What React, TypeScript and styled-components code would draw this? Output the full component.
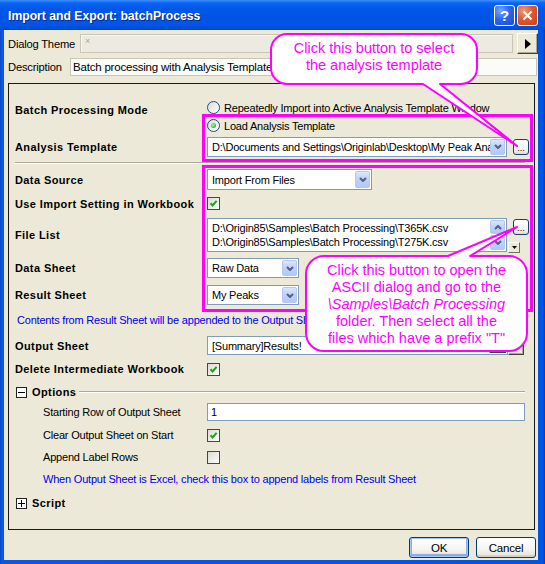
import styled, { createGlobalStyle } from "styled-components";

const GlobalStyle = createGlobalStyle`
	html, body {
		margin: 0;
		padding: 0;
		background: #fff;
	}

	body {
		font-family: "Liberation Sans", Arial, sans-serif;
		font-size: 11px;
		letter-spacing: -.2px;
		color: #000;
	}
`;

const MAGENTA = "#FF00FF";

const Window = styled.div`
	position: relative;
	width: 545px;
	height: 564px;
	display: flex;
	flex-direction: column;
	background: linear-gradient(to right, #0841BB 0, #0A57E6 1px, #0055E5 calc(100% - 2px), #0036B0 100%);
	overflow: hidden;
`;

const TitleBar = styled.div`
	height: 30px;
	flex: none;
	display: flex;
	align-items: center;
	padding: 0 7px 0 8px;
	background: linear-gradient(to bottom, #3D8FFC 0, #0B63F2 3px, #0058E8 9px, #0054E3 18px, #0056E7 25px, #0048D0 30px);
`;

const Title = styled.span`
	flex: 1;
	color: #fff;
	font-weight: bold;
	font-size: 12.2px;
	letter-spacing: 0;
	text-shadow: 1px 1px 0 #0A2A8C;
	margin-top: 1px;
`;

const CaptionButton = styled.span<{ $variant: "help" | "close" }>`
	width: 21px;
	height: 21px;
	box-sizing: border-box;
	margin-left: 2px;
	border: 1px solid #fff;
	border-radius: 3px;
	display: flex;
	align-items: center;
	justify-content: center;
	color: #fff;
	font-weight: bold;
	font-size: 15px;
	background: ${(p) =>
		p.$variant === "close"
			? "radial-gradient(circle at 30% 25%, #F39A7A 0, #E2582E 45%, #C7401A 100%)"
			: "radial-gradient(circle at 30% 25%, #7AA7FF 0, #2A66EE 45%, #1A4DD0 100%)"};
`;

const Client = styled.div`
	flex: 1;
	margin: 0 7px 4px 4px;
	padding: 3px 0 0 4px;
	background: #ECE9D8;
	display: flex;
	flex-direction: column;
`;

const TopRow = styled.div<{ $mt: number; $h: number }>`
	display: flex;
	align-items: center;
	height: ${(p) => p.$h}px;
	margin-top: ${(p) => p.$mt}px;
`;

const TopLabel = styled.span<{ $w: number }>`
	width: ${(p) => p.$w}px;
	flex: none;
	font-size: 11.2px;
`;

const ThemeBox = styled.div`
	flex: 1;
	height: 19px;
	box-sizing: border-box;
	margin-right: 4px;
	border: 1px solid #C9C6B6;
	background: #EDEBE1;
	box-shadow: inset 1px 1px 0 #F7F6F0;
	color: #A8A69C;
	font-size: 9px;
	padding: 1px 0 0 4px;
`;

const ClassicButton = styled.span<{ $w: number; $h: number }>`
	width: ${(p) => p.$w}px;
	height: ${(p) => p.$h}px;
	box-sizing: border-box;
	flex: none;
	display: flex;
	align-items: center;
	justify-content: center;
	background: #ECE9D8;
	border: 1px solid;
	border-color: #fff #404040 #404040 #fff;
	box-shadow: inset -1px -1px 0 #ACA899;
`;

const DescBox = styled.div`
	flex: 1;
	height: 18px;
	box-sizing: border-box;
	margin-right: 1px;
	border: 1px solid #C9C6B6;
	background: #FBFBF8;
	padding: 0 2px;
	line-height: 16px;
	white-space: nowrap;
	overflow: hidden;
	font-size: 11.5px;
`;

const Panel = styled.div`
	flex: 1;
	margin: 7px 3px 0 0;
	border: 1px solid #1A1A1A;
	display: flex;
	flex-direction: column;
	padding-top: 15px;
`;

const Row = styled.div<{ $mt: number; $h: number }>`
	display: grid;
	grid-template-columns: 198px 1fr;
	align-items: center;
	height: ${(p) => p.$h}px;
	margin-top: ${(p) => p.$mt}px;
	padding-right: 9px;
`;

const Label = styled.span<{ $indent?: boolean; $shift?: number }>`
	padding-left: ${(p) => (p.$indent ? 34 : 6)}px;
	font-weight: ${(p) => (p.$indent ? "normal" : "bold")};
	letter-spacing: ${(p) => (p.$indent ? "-.2px" : ".4px")};
	margin-top: ${(p) => p.$shift ?? 0}px;
	white-space: nowrap;
`;

const Control = styled.div`
	display: flex;
	align-items: center;
	height: 100%;
`;

const Note = styled.div<{ $indent?: boolean }>`
	grid-column: 1 / -1;
	padding-left: ${(p) => (p.$indent ? 34 : 8)}px;
	color: #0000F0;
	white-space: nowrap;
`;

const Separator = styled.div`
	margin: 5px 9px 0 6px;
	height: 0;
	border-top: 1px solid #ACA899;
	border-bottom: 1px solid #fff;
`;

const RadioCircle = styled.span<{ $checked?: boolean }>`
	width: 13px;
	height: 13px;
	box-sizing: border-box;
	flex: none;
	border-radius: 50%;
	border: 1px solid #1C5180;
	background: linear-gradient(135deg, #DCDCD7 0%, #F4F4F0 70%, #FFFFFF 100%);
	display: flex;
	align-items: center;
	justify-content: center;
	margin-right: 4px;

	&::after {
		content: "";
		width: 5px;
		height: 5px;
		border-radius: 50%;
		background: ${(p) => (p.$checked ? "radial-gradient(circle at 40% 40%, #B6F5B2 0, #3DC13A 60%, #21A121 100%)" : "transparent")};
	}
`;

const RadioText = styled.span`
	white-space: nowrap;
`;

const CheckBox = styled.span`
	width: 13px;
	height: 13px;
	box-sizing: border-box;
	flex: none;
	border: 1px solid #1C5180;
	background: linear-gradient(135deg, #DCDCD7 0%, #F2F2EE 70%, #FFFFFF 100%);
	display: flex;
	align-items: center;
	justify-content: center;
`;

const ComboBox = styled.div<{ $w: number; $h: number }>`
	width: ${(p) => p.$w}px;
	height: ${(p) => p.$h}px;
	box-sizing: border-box;
	flex: none;
	border: 1px solid #7F9DB9;
	background: #fff;
	padding: 1px;
	display: flex;
`;

const FieldText = styled.span`
	flex: 1;
	padding-left: 3px;
	display: flex;
	align-items: center;
	white-space: nowrap;
	overflow: hidden;
`;

const ArrowButton = styled.span<{ $h?: number }>`
	width: 15px;
	height: ${(p) => (p.$h ? `${p.$h}px` : "auto")};
	box-sizing: border-box;
	flex: none;
	border: 1px solid #B4C8F5;
	border-radius: 2px;
	background: linear-gradient(to bottom, #DCE6FE 0%, #C2D4FC 40%, #B3C7F6 100%);
	display: flex;
	align-items: center;
	justify-content: center;
`;

const EllipsisButton = styled.span`
	width: 16px;
	height: 16px;
	box-sizing: border-box;
	flex: none;
	margin-left: 6px;
	border: 1px solid #1C3F78;
	border-radius: 3px;
	background: linear-gradient(to bottom, #FFFFFF 0%, #F3F3EE 70%, #DCDAD0 100%);
	font-size: 9px;
	letter-spacing: 0;
	text-align: center;
	line-height: 16px;
`;

const ListBox = styled.div`
	width: 300px;
	height: 34px;
	box-sizing: border-box;
	flex: none;
	border: 1px solid #7F9DB9;
	background: #fff;
	padding: 1px;
	display: flex;
`;

const ListLines = styled.div`
	flex: 1;
	padding: 1px 0 0 3px;
	line-height: 14px;
	white-space: nowrap;
`;

const ScrollColumn = styled.div`
	display: flex;
	flex-direction: column;
	gap: 1px;
`;

const SideColumn = styled.div`
	height: 100%;
	display: flex;
	flex-direction: column;
	align-items: flex-start;
	justify-content: space-between;
	padding-top: 1px;
`;

const MiniDrop = styled(ClassicButton)`
	margin-left: 1px;
	border-color: #fff #716F64 #716F64 #fff;
	box-shadow: none;
`;

const TextBox = styled.div<{ $w: number; $h: number }>`
	width: ${(p) => p.$w}px;
	height: ${(p) => p.$h}px;
	box-sizing: border-box;
	flex: none;
	border: 1px solid #7F9DB9;
	background: #fff;
	padding-left: 3px;
	display: flex;
	align-items: center;
	white-space: nowrap;
`;

const GroupHeader = styled.div`
	grid-column: 1 / -1;
	display: flex;
	align-items: center;
	padding-left: 7px;
`;

const Expander = styled.span<{ $open: boolean }>`
	position: relative;
	width: 11px;
	height: 11px;
	box-sizing: border-box;
	flex: none;
	border: 1px solid #222;
	background: #fff;

	&::before {
		content: "";
		position: absolute;
		left: 1px;
		top: 4px;
		width: 7px;
		height: 1px;
		background: #000;
	}

	&::after {
		content: "";
		display: ${(p) => (p.$open ? "none" : "block")};
		position: absolute;
		left: 4px;
		top: 1px;
		width: 1px;
		height: 7px;
		background: #000;
	}
`;

const GroupTitle = styled.span`
	margin-left: 5px;
	font-weight: bold;
	letter-spacing: .4px;
`;

const GroupLine = styled.span`
	flex: 1;
	margin-left: 3px;
	height: 0;
	border-top: 1px solid #ACA899;
	border-bottom: 1px solid #fff;
`;

const ButtonRow = styled.div`
	flex: none;
	display: flex;
	justify-content: flex-end;
	gap: 7px;
	padding: 7px 2px 2px 0;
`;

const PushButton = styled.span<{ $default?: boolean }>`
	width: 60px;
	height: 21px;
	box-sizing: border-box;
	border: 1px solid #003C74;
	border-radius: 3px;
	background: linear-gradient(to bottom, #FFFFFF 0%, #F5F4EF 60%, #E3E0D6 100%);
	box-shadow: ${(p) => (p.$default ? "inset 0 0 0 1px #A9C5F3, inset 0 -1px 0 2px #89ADE4" : "inset 0 -2px 0 #D6D0C5")};
	display: flex;
	align-items: center;
	justify-content: center;
	font-size: 11.5px;
`;

const Overlay = styled.svg`
	position: absolute;
	left: 0;
	top: 0;
	pointer-events: none;
`;

const CalloutText = styled.div<{ $x: number; $y: number; $w: number }>`
	position: absolute;
	left: ${(p) => p.$x}px;
	top: ${(p) => p.$y}px;
	width: ${(p) => p.$w}px;
	text-align: center;
	color: ${MAGENTA};
	font-size: 14.5px;
	line-height: 17px;
	letter-spacing: 0;
	white-space: nowrap;
	pointer-events: none;
`;

const Chevron = ({ up = false }: { up?: boolean }) => (
	<svg width="8" height="5" viewBox="0 0 8 5">
		<path d={up ? "M1 4 L4 1 L7 4" : "M1 1 L4 4 L7 1"} stroke="#4D6185" strokeWidth="2" fill="none" />
	</svg>
);

const Check = () => (
	<svg width="9" height="9" viewBox="0 0 9 9">
		<path d="M1.5 4.2 L3.6 6.4 L7.6 1.8" stroke="#21A121" strokeWidth="2" fill="none" />
	</svg>
);

const Combo = ({ w, h, text }: { w: number; h: number; text: string }) => (
	<ComboBox $w={w} $h={h}>
		<FieldText>{text}</FieldText>
		<ArrowButton>
			<Chevron />
		</ArrowButton>
	</ComboBox>
);

// callout bubbles: rounded box plus a tail pointing at a "..." button
const bubbleOne = "M287 34 H461 A16 16 0 0 1 477 50 V68 A16 16 0 0 1 461 84 H440 L517 146 L423 84 H287 A16 16 0 0 1 271 68 V50 A16 16 0 0 1 287 34 Z";
const bubbleTwo = "M324 256 H448 L517 227 L470 256 H509 A18 18 0 0 1 527 274 V333 A18 18 0 0 1 509 351 H324 A18 18 0 0 1 306 333 V274 A18 18 0 0 1 324 256 Z";

const App = () => {
	return (
		<>
			<GlobalStyle />
			<Window>
				<TitleBar>
					<Title>Import and Export: batchProcess</Title>
					<CaptionButton $variant="help">?</CaptionButton>
					<CaptionButton $variant="close">
						<svg width="11" height="11" viewBox="0 0 11 11">
							<path d="M1.5 1.5 L9.5 9.5 M9.5 1.5 L1.5 9.5" stroke="#fff" strokeWidth="2.2" />
						</svg>
					</CaptionButton>
				</TitleBar>

				<Client>
					<TopRow $mt={0} $h={21}>
						<TopLabel $w={72}>Dialog Theme</TopLabel>
						<ThemeBox>×</ThemeBox>
						<ClassicButton $w={21} $h={21}>
							<svg width="6" height="10" viewBox="0 0 6 10">
								<path d="M0 0 L6 5 L0 10 Z" fill="#000" />
							</svg>
						</ClassicButton>
					</TopRow>
					<TopRow $mt={4} $h={18}>
						<TopLabel $w={62}>Description</TopLabel>
						<DescBox>Batch processing with Analysis Template to import multiple files</DescBox>
					</TopRow>

					<Panel>
						<Row $mt={0} $h={17}>
							<Label $shift={4}>Batch Processing Mode</Label>
							<Control>
								<RadioCircle />
								<RadioText>Repeatedly Import into Active Analysis Template Window</RadioText>
							</Control>
						</Row>
						<Row $mt={1} $h={17}>
							<span />
							<Control>
								<RadioCircle $checked />
								<RadioText>Load Analysis Template</RadioText>
							</Control>
						</Row>
						<Row $mt={2} $h={21}>
							<Label>Analysis Template</Label>
							<Control>
								<Combo w={300} h={20} text="D:\Documents and Settings\Originlab\Desktop\My Peak Analysis.ogw" />
								<EllipsisButton>...</EllipsisButton>
							</Control>
						</Row>

						<Separator />

						<Row $mt={5} $h={21}>
							<Label>Data Source</Label>
							<Control>
								<Combo w={165} h={21} text="Import From Files" />
							</Control>
						</Row>
						<Row $mt={6} $h={15}>
							<Label>Use Import Setting in Workbook</Label>
							<Control>
								<CheckBox><Check /></CheckBox>
							</Control>
						</Row>
						<Row $mt={7} $h={34}>
							<Label>File List</Label>
							<Control>
								<ListBox>
									<ListLines>
										D:\Origin85\Samples\Batch Processing\T365K.csv
										<br />
										D:\Origin85\Samples\Batch Processing\T275K.csv
									</ListLines>
									<ScrollColumn>
										<ArrowButton $h={14}><Chevron up /></ArrowButton>
										<ArrowButton $h={15}><Chevron /></ArrowButton>
									</ScrollColumn>
								</ListBox>
								<SideColumn>
									<EllipsisButton>...</EllipsisButton>
									<MiniDrop $w={12} $h={11}>
										<svg width="5" height="3" viewBox="0 0 5 3">
											<path d="M0 0 H5 L2.5 3 Z" fill="#000" />
										</svg>
									</MiniDrop>
								</SideColumn>
							</Control>
						</Row>
						<Row $mt={6} $h={20}>
							<Label>Data Sheet</Label>
							<Control>
								<Combo w={92} h={20} text="Raw Data" />
							</Control>
						</Row>
						<Row $mt={7} $h={20}>
							<Label>Result Sheet</Label>
							<Control>
								<Combo w={92} h={20} text="My Peaks" />
							</Control>
						</Row>
						<Row $mt={8} $h={14}>
							<Note>Contents from Result Sheet will be appended to the Output Sheet.</Note>
						</Row>
						<Row $mt={9} $h={19}>
							<Label>Output Sheet</Label>
							<Control>
								<ComboBox $w={301} $h={19}>
									<FieldText>[Summary]Results!</FieldText>
									<ClassicButton $w={17} $h={15} />
								</ComboBox>
								<ClassicButton $w={16} $h={19} />
							</Control>
						</Row>
						<Row $mt={7} $h={14}>
							<Label>Delete Intermediate Workbook</Label>
							<Control>
								<CheckBox><Check /></CheckBox>
							</Control>
						</Row>
						<Row $mt={9} $h={14}>
							<GroupHeader>
								<Expander $open />
								<GroupTitle>Options</GroupTitle>
								<GroupLine />
							</GroupHeader>
						</Row>
						<Row $mt={4} $h={18}>
							<Label $indent>Starting Row of Output Sheet</Label>
							<Control>
								<TextBox $w={318} $h={18}>1</TextBox>
							</Control>
						</Row>
						<Row $mt={7} $h={14}>
							<Label $indent>Clear Output Sheet on Start</Label>
							<Control>
								<CheckBox><Check /></CheckBox>
							</Control>
						</Row>
						<Row $mt={8} $h={14}>
							<Label $indent>Append Label Rows</Label>
							<Control>
								<CheckBox />
							</Control>
						</Row>
						<Row $mt={8} $h={14}>
							<Note $indent>When Output Sheet is Excel, check this box to append labels from Result Sheet</Note>
						</Row>
						<Row $mt={10} $h={14}>
							<GroupHeader>
								<Expander $open={false} />
								<GroupTitle>Script</GroupTitle>
							</GroupHeader>
						</Row>
					</Panel>

					<ButtonRow>
						<PushButton $default>OK</PushButton>
						<PushButton>Cancel</PushButton>
					</ButtonRow>
				</Client>

				<Overlay width="545" height="564" viewBox="0 0 545 564">
					<rect x="203.5" y="115.5" width="328" height="45" fill="none" stroke={MAGENTA} strokeWidth="3" />
					<rect x="203.5" y="166.5" width="328" height="144" fill="none" stroke={MAGENTA} strokeWidth="3" />
					<path d={bubbleOne} fill="#fff" stroke={MAGENTA} strokeWidth="2" strokeLinejoin="round" />
					<path d={bubbleTwo} fill="#fff" stroke={MAGENTA} strokeWidth="2" strokeLinejoin="round" />
				</Overlay>
				<CalloutText $x={271} $y={40} $w={206}>
					Click this button to select
					<br />
					the analysis template
				</CalloutText>
				<CalloutText $x={306} $y={262} $w={221}>
					Click this button to open the
					<br />
					ASCII dialog and go to the
					<br />
					<i>\Samples\Batch Processing</i>
					<br />
					folder. Then select all the
					<br />
					files which have a prefix "T"
				</CalloutText>
			</Window>
		</>
	);
};

export default App;
